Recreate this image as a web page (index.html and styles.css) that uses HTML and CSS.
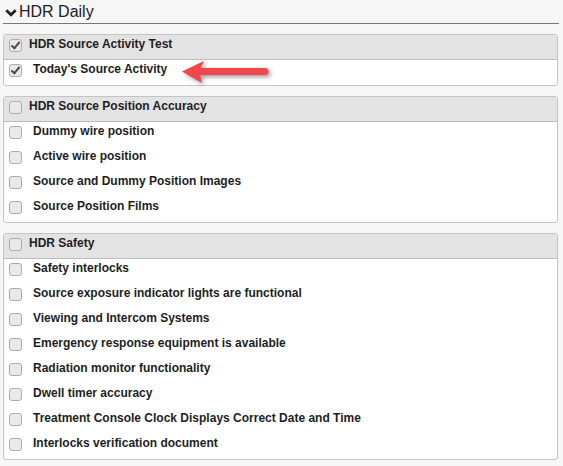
FILE: index.html
```html
<!DOCTYPE html>
<html>
<head>
<meta charset="utf-8">
<link rel="stylesheet" href="styles.css">
</head>
<body>
<div class="page">
  <div class="title"><span class="chev"><svg width="12" height="8" viewBox="0 0 12 8"><path d="M1.3 1.3 L6 5.8 L10.7 1.3" fill="none" stroke="#222" stroke-width="2.8"/></svg></span>HDR Daily</div>

  <div class="panel">
    <div class="head"><span class="cb checked"></span><span class="htext">HDR Source Activity Test</span></div>
    <div class="row"><span class="cb checked"></span><span class="rtext">Today's Source Activity</span></div>
  </div>

  <div class="panel">
    <div class="head"><span class="cb"></span><span class="htext">HDR Source Position Accuracy</span></div>
    <div class="row"><span class="cb"></span><span class="rtext">Dummy wire position</span></div>
    <div class="row"><span class="cb"></span><span class="rtext">Active wire position</span></div>
    <div class="row"><span class="cb"></span><span class="rtext">Source and Dummy Position Images</span></div>
    <div class="row"><span class="cb"></span><span class="rtext">Source Position Films</span></div>
  </div>

  <div class="panel">
    <div class="head"><span class="cb"></span><span class="htext">HDR Safety</span></div>
    <div class="row"><span class="cb"></span><span class="rtext">Safety interlocks</span></div>
    <div class="row"><span class="cb"></span><span class="rtext">Source exposure indicator lights are functional</span></div>
    <div class="row"><span class="cb"></span><span class="rtext">Viewing and Intercom Systems</span></div>
    <div class="row"><span class="cb"></span><span class="rtext">Emergency response equipment is available</span></div>
    <div class="row"><span class="cb"></span><span class="rtext">Radiation monitor functionality</span></div>
    <div class="row"><span class="cb"></span><span class="rtext">Dwell timer accuracy</span></div>
    <div class="row"><span class="cb"></span><span class="rtext">Treatment Console Clock Displays Correct Date and Time</span></div>
    <div class="row"><span class="cb"></span><span class="rtext">Interlocks verification document</span></div>
  </div>

  <svg class="arrow" width="100" height="34" viewBox="178 56 100 34">
    <g fill="#f2464b">
      <line x1="200" y1="71.5" x2="265" y2="71.5" stroke="#f2464b" stroke-width="7" stroke-linecap="round"/>
      <path d="M182 71.5 L204 61 L199 71.5 L202 83 Z"/>
    </g>
  </svg>
</div>
</body>
</html>
```

FILE: styles.css
```css
html, body {
  margin: 0;
  padding: 0;
  background: #f6f6f6;
}
body {
  font-family: "Liberation Sans", Arial, sans-serif;
  color: #1e1e1e;
}
.page {
  position: relative;
  padding: 0 0 0 3px;
  width: 556px;
}
.title {
  box-sizing: border-box;
  height: 24px;
  border-bottom: 1px solid #777;
  font-size: 16px;
  line-height: 18px;
  padding-bottom: 2px;
  display: flex;
  align-items: flex-end;
  color: #222;
}
.chev {
  display: inline-flex;
  width: 14px;
  padding-left: 2px;
  margin-bottom: 4px;
}
.panel {
  margin-top: 10px;
  width: 555px;
  box-sizing: border-box;
  border: 1px solid #c4c4c4;
  border-radius: 3px;
  background: #fff;
  overflow: hidden;
}
.head {
  box-sizing: border-box;
  height: 25px;
  padding-bottom: 6px;
  background: #e3e3e3;
  border-bottom: 1px solid #bdbdbd;
  display: flex;
  align-items: center;
  font-size: 12px;
  font-weight: bold;
}
.row {
  box-sizing: border-box;
  height: 25px;
  padding-bottom: 7px;
  display: flex;
  align-items: center;
  font-size: 12px;
  font-weight: bold;
}
.cb {
  width: 11px;
  height: 11px;
  margin-left: 5px;
  border: 1px solid #adadad;
  border-radius: 3px;
  background: #e9e9e9;
  flex: none;
  position: relative;
  top: 1px;
}
.cb.checked::after {
  content: "";
  position: absolute;
  left: 3px;
  top: 0px;
  width: 3px;
  height: 7px;
  border-right: 2px solid #4a4a4a;
  border-bottom: 2px solid #4a4a4a;
  transform: rotate(40deg);
}
.htext {
  margin-left: 7px;
}
.rtext {
  margin-left: 11px;
}
.arrow {
  position: absolute;
  left: 178px;
  top: 56px;
  filter: drop-shadow(2px 2px 2px rgba(0,0,0,0.4));
}
```
